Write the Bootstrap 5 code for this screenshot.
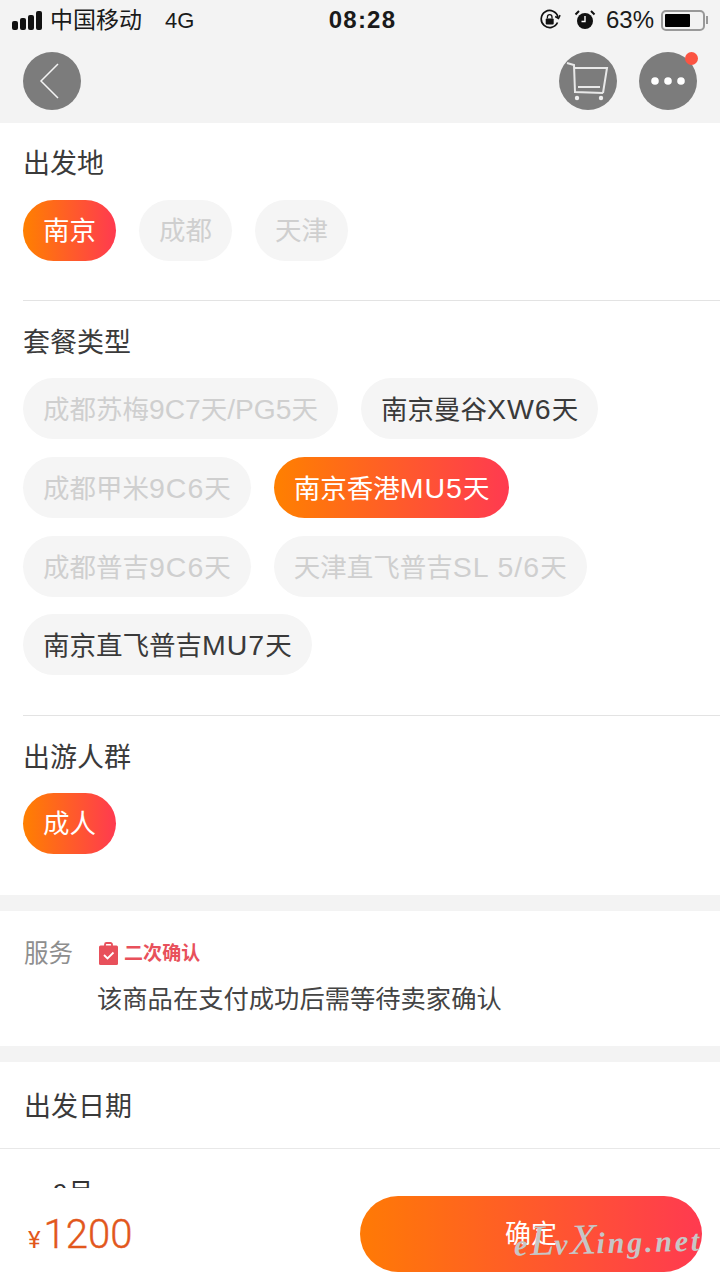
<!DOCTYPE html>
<html lang="zh">
<head>
<meta charset="utf-8">
<title>选择</title>
<link rel="stylesheet" href="https://cdn.jsdelivr.net/npm/bootstrap@5.3.0/dist/css/bootstrap.min.css">
<style>
html,body{margin:0;height:1280px;overflow:hidden}
body{font-family:"Liberation Sans","Noto Sans CJK SC",sans-serif;color:#333;background:#fff}
.shell{width:720px;height:1280px}
.topbar{height:123px;background:#f3f3f3;flex:none}
.statusline{height:40px;padding:0 11px 0 12px;font-size:23px;color:#1a1a1a;position:relative}
.clock{position:absolute;left:5px;right:0;top:0;line-height:40px;text-align:center;font-size:24px;font-weight:700;letter-spacing:1.2px;color:#1a1a1a}
.bars{gap:2px;margin-right:8px;height:19px}
.bars i{display:block;width:6px;background:#111;border-radius:2px}
.bar-a{height:9px}.bar-b{height:12px}.bar-c{height:15px}.bar-d{height:19px}
.net{margin-left:23px;font-size:22px}
.alarm{margin-left:13px}
.pct{font-size:24px;margin-left:10px}
.batt{width:44px;height:21px;border:2px solid #999;border-radius:5px;padding:2px;margin-left:7px;margin-right:5px}
.batt i{display:block;height:100%;width:70%;background:#000;border-radius:1px}
.nub{margin-left:-4px}
.navline{padding:12px 23px 0 23px}
.roundbtn{width:58px;height:58px;border-radius:50%;background:#7c7c7c;position:relative}
.dot{position:absolute;width:13px;height:13px;border-radius:50%;background:#fb5442;top:0;right:-1px}
.gap-nav{gap:22px}
.scrollarea{flex:1 1 auto;min-height:0;overflow:hidden}
.group{padding:23px 0 0 23px}
.group-a{height:177px}
.group-b{height:414px}
.group-c{height:179px}
.grouptitle{font-size:27px;line-height:36px;color:#3a3a3a;margin-bottom:18px}
.title-low{line-height:38px;margin-bottom:16px}
.chips{gap:17.800px 23px;padding-right:23px}
.chip{height:61px;line-height:62px;padding:0 20px;border-radius:31px;background:#f5f5f5;font-size:26.500px;color:#3a3a3a;white-space:nowrap}
.chip-off{color:#cfcfcf}
.chip-on{color:#fff;background:linear-gradient(90deg,#ff8000,#ff3a50)}
.lat{font-size:28.500px;letter-spacing:1px}
.lat-tight{font-size:28.200px}
.rule{height:1px;background:#e3e3e3;margin-left:23px}
.band{height:16px;background:#f3f3f3}
.servicebox{padding:24px 23px 0 24px;height:135px}
.servicelabel{font-size:24.500px;line-height:38px;color:#8e8e8e;width:74px;flex:none}
.servicecol{margin-left:-1px}
.confirmtag{font-size:19px;line-height:36px;font-weight:700;color:#e8505b;gap:5px;letter-spacing:.1px;margin-top:1px}
.tagicon{margin-left:1px}
.servicenote{font-size:25.300px;line-height:36px;color:#444;margin-top:9px}
.datetitle{font-size:27px;line-height:38px;padding:26px 24px 22px;color:#3a3a3a}
.hair{height:1px;background:#e8e8e8}
.month{font-size:26px;line-height:36px;padding:26px 0 0 53px;color:#333}
.bottombar{height:92px;flex:none;background:#fff;padding:8px 18px 8px 28px;position:relative}
.price{color:#e2571c;line-height:1;font-family:Roboto,"Liberation Sans",sans-serif;padding-top:2px}
.yen{font-size:24px;margin-right:3px}
.amount{font-size:40px;font-weight:300;-webkit-text-stroke:.4px #e2571c}
.okbtn{width:342px;height:76px;border-radius:38px;border:0;background:linear-gradient(90deg,#ff7a05,#ff3a50);color:#fff;font-size:26px;padding:0}
.wmark{position:absolute;left:514px;top:29px;font-family:"Liberation Serif",serif;font-style:italic;font-weight:700;font-size:30px;color:#c6c6c6;letter-spacing:2.800px;transform:rotate(-1.500deg);white-space:nowrap;line-height:44px;pointer-events:none}
.wcap{font-size:43px;letter-spacing:0;font-weight:400}
</style>
</head>
<body>
<div class="shell d-flex flex-column">
  <header class="topbar">
    <div class="statusline d-flex align-items-center">
      <div class="bars d-flex align-items-end">
        <i class="bar-a"></i><i class="bar-b"></i><i class="bar-c"></i><i class="bar-d"></i>
      </div>
      <span>中国移动</span><span class="net">4G</span>
      <div class="clock">08:28</div>
      <div class="ms-auto d-flex align-items-center">
        <svg width="22" height="22" viewBox="0 0 22 22" fill="none" stroke="#111" stroke-width="1.700"><path d="M18.500 13.500A8.500 8.500 0 1 1 19 8"/><path d="M16.200 7.500l3.300 2 1.600-3.400" stroke-width="1.500"/><rect x="6.700" y="9.500" width="8" height="6" fill="#111" stroke="none" rx="1"/><path d="M8.400 9.500V8a2.300 2.300 0 0 1 4.600 0v1.500" stroke-width="1.300"/></svg>
        <svg class="alarm" width="22" height="22" viewBox="0 0 22 22"><circle cx="11" cy="12" r="8" fill="#111"/><path d="M11 7v5.500H7.500" stroke="#fff" stroke-width="1.400" fill="none"/><path d="M1.500 5.500 5 2M20.500 5.500 17 2" stroke="#111" stroke-width="2"/></svg>
        <span class="pct">63%</span>
        <div class="batt"><i></i></div>
        <svg class="nub" width="3" height="8" viewBox="0 0 3 8"><rect width="2" height="8" fill="#999"/></svg>
      </div>
    </div>
    <div class="navline d-flex justify-content-between">
      <div class="roundbtn">
        <svg class="d-block" width="58" height="58" viewBox="0 0 58 58" fill="none" stroke="#f4f4f4" stroke-width="1.500"><path d="M35 12 18 29l17 17"/></svg>
      </div>
      <div class="d-flex gap-nav">
        <div class="roundbtn">
          <svg class="d-block" width="58" height="58" viewBox="0 0 58 58" fill="none" stroke="#e8e8e8" stroke-width="2"><path d="M8 11l7 2 1 27 28 1"/><path d="M15 16h33l-4 25"/><path d="M19 35h22"/><circle cx="18" cy="46" r="2.200" fill="#eee" stroke="none"/><circle cx="42" cy="46" r="2.200" fill="#eee" stroke="none"/></svg>
        </div>
        <div class="roundbtn d-flex align-items-center justify-content-center">
          <svg width="34" height="8" viewBox="0 0 34 8"><circle cx="4" cy="4" r="3.800" fill="#fff"/><circle cx="17" cy="4" r="3.800" fill="#fff"/><circle cx="30" cy="4" r="3.800" fill="#fff"/></svg>
          <span class="dot"></span>
        </div>
      </div>
    </div>
  </header>

  <main class="scrollarea">
    <section class="group group-a">
      <div class="grouptitle">出发地</div>
      <div class="chips d-flex flex-wrap">
        <span class="chip chip-on">南京</span>
        <span class="chip chip-off">成都</span>
        <span class="chip chip-off">天津</span>
      </div>
    </section>
    <div class="rule"></div>
    <section class="group group-b">
      <div class="grouptitle title-low">套餐类型</div>
      <div class="chips d-flex flex-wrap">
        <span class="chip chip-off">成都苏梅<span class="lat-tight">9C7</span>天<span class="lat-tight">/PG5</span>天</span>
        <span class="chip">南京曼谷<span class="lat">XW6</span>天</span>
        <span class="chip chip-off">成都甲米<span class="lat">9C6</span>天</span>
        <span class="chip chip-on">南京香港<span class="lat">MU5</span>天</span>
        <span class="chip chip-off">成都普吉<span class="lat">9C6</span>天</span>
        <span class="chip chip-off">天津直飞普吉<span class="lat">SL 5/6</span>天</span>
        <span class="chip">南京直飞普吉<span class="lat">MU7</span>天</span>
      </div>
    </section>
    <div class="rule"></div>
    <section class="group group-c">
      <div class="grouptitle title-low">出游人群</div>
      <div class="chips d-flex flex-wrap">
        <span class="chip chip-on">成人</span>
      </div>
    </section>
    <div class="band"></div>
    <section class="servicebox">
      <div class="d-flex">
        <div class="servicelabel">服务</div>
        <div class="servicecol">
          <div class="confirmtag d-flex align-items-center">
            <svg class="tagicon" width="21" height="24" viewBox="0 0 21 24"><path d="M7 4V2.500A1.500 1.500 0 0 1 8.500 1h4A1.500 1.500 0 0 1 14 2.500V4" fill="none" stroke="#e8505b" stroke-width="1.800"/><rect x="1" y="3.500" width="19" height="19.500" rx="1.500" fill="#e8505b"/><path d="M6 13l3.500 3.500L15.500 10.500" fill="none" stroke="#fff" stroke-width="1.800"/></svg>
            <span>二次确认</span>
          </div>
          <div class="servicenote">该商品在支付成功后需等待卖家确认</div>
        </div>
      </div>
    </section>
    <div class="band"></div>
    <section>
      <div class="datetitle">出发日期</div>
      <div class="hair"></div>
      <div class="month">9月</div>
    </section>
  </main>

  <footer class="bottombar d-flex align-items-center justify-content-between">
    <div class="price"><span class="yen">¥</span><span class="amount">1200</span></div>
    <button type="button" class="okbtn">确定</button>
    <div class="wmark">e<span class="wcap">L</span>v<span class="wcap">X</span>ing.net</div>
  </footer>
</div>
<script src="https://cdn.jsdelivr.net/npm/bootstrap@5.3.0/dist/js/bootstrap.bundle.min.js"></script>
</body>
</html>
